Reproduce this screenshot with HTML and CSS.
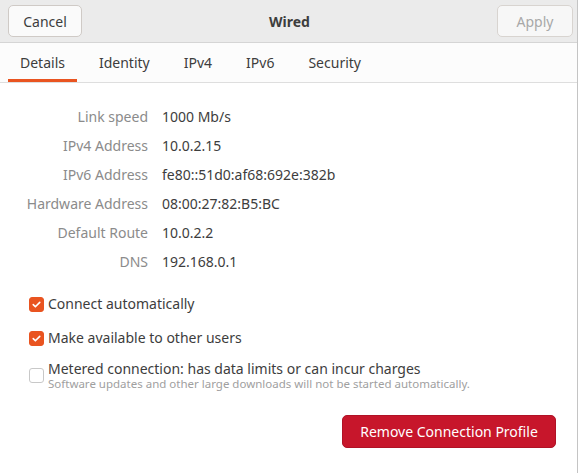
FILE: index.html
```html
<!DOCTYPE html>
<html>
<head>
<meta charset="utf-8">
<link rel="stylesheet" href="styles.css">
</head>
<body>
<div class="window">
  <div class="header">
    <button class="hbtn cancel">Cancel</button>
    <div class="title">Wired</div>
    <button class="hbtn apply">Apply</button>
  </div>
  <div class="tabs">
    <div class="tab active">Details</div>
    <div class="tab">Identity</div>
    <div class="tab">IPv4</div>
    <div class="tab">IPv6</div>
    <div class="tab">Security</div>
  </div>
  <div class="content">
    <div class="grid">
      <div class="lbl">Link speed</div><div class="val">1000 Mb/s</div>
      <div class="lbl">IPv4 Address</div><div class="val">10.0.2.15</div>
      <div class="lbl">IPv6 Address</div><div class="val">fe80::51d0:af68:692e:382b</div>
      <div class="lbl">Hardware Address</div><div class="val">08:00:27:82:B5:BC</div>
      <div class="lbl">Default Route</div><div class="val">10.0.2.2</div>
      <div class="lbl">DNS</div><div class="val">192.168.0.1</div>
    </div>
    <div class="checks">
      <div class="check">
        <span class="box on"><svg viewBox="0 0 16 16" width="16" height="16"><path d="M4 8.2l2.6 2.6L12 5.4" fill="none" stroke="#fff" stroke-width="2" stroke-linecap="round" stroke-linejoin="round"/></svg></span>
        <span class="ctext">Connect automatically</span>
      </div>
      <div class="check">
        <span class="box on"><svg viewBox="0 0 16 16" width="16" height="16"><path d="M4 8.2l2.6 2.6L12 5.4" fill="none" stroke="#fff" stroke-width="2" stroke-linecap="round" stroke-linejoin="round"/></svg></span>
        <span class="ctext">Make available to other users</span>
      </div>
      <div class="check metered">
        <span class="box"></span>
        <div class="ctexts">
          <span class="ctext">Metered connection: has data limits or can incur charges</span>
          <span class="sub">Software updates and other large downloads will not be started automatically.</span>
        </div>
      </div>
    </div>
    <div class="actions">
      <button class="remove">Remove Connection Profile</button>
    </div>
  </div>
</div>
</body>
</html>
```
FILE: styles.css
```css
html, body {
  margin: 0;
  padding: 0;
  background: #ffffff;
}
body {
  font-family: "Noto Sans", "DejaVu Sans", sans-serif;
  font-size: 14px;
  color: #3d3d3d;
}
.window {
  width: 577px;
  height: 473px;
  border-right: 1px solid #c4c4c4;
  background: #ffffff;
  display: flex;
  flex-direction: column;
}
.header {
  height: 42px;
  background: #ebebeb;
  border-bottom: 1px solid #d5d5d5;
  display: flex;
  align-items: center;
  padding: 0 4px 0 8px;
  flex-shrink: 0;
}
.hbtn {
  height: 32px;
  font-family: inherit;
  font-size: 14px;
  border: 1px solid #cfcac6;
  border-radius: 5px;
  background: #fafafa;
  color: #3d3d3d;
  padding: 0;
}
.cancel { width: 74px; }
.apply { width: 76px; color: #a8a8a8; background: #f7f7f7; border-color: #d8d4d0; }
.title {
  flex: 1;
  text-align: center;
  font-weight: bold;
  color: #3d3d3d;
}
.tabs {
  height: 39px;
  border-bottom: 1px solid #dedede;
  display: flex;
  padding-left: 8px;
  background: #fcfcfc;
  flex-shrink: 0;
}
.tab {
  padding: 3px 12px 0;
  margin-right: 10px;
  display: flex;
  align-items: center;
  color: #3d3d3d;
  border-bottom: 3px solid transparent;
  box-sizing: border-box;
  height: 39px;
}
.tab.active { border-bottom-color: #e95420; }
.content {
  padding-top: 19px;
  flex: 1;
  display: flex;
  flex-direction: column;
}
.grid {
  display: grid;
  grid-template-columns: 148px auto;
  column-gap: 14px;
  grid-auto-rows: 29px;
  align-items: center;
}
.lbl { text-align: right; color: #8b8b8b; }
.val { color: #3d3d3d; }
.checks {
  padding-left: 29px;
  padding-top: 16px;
  display: flex;
  flex-direction: column;
  gap: 10px;
}
.check {
  display: flex;
  align-items: center;
  gap: 4px;
  min-height: 24px;
}
.box {
  width: 15px;
  height: 15px;
  border-radius: 3px;
  border: 1px solid #c8c8c8;
  box-sizing: border-box;
  background: #ffffff;
  display: flex;
  align-items: center;
  justify-content: center;
  flex-shrink: 0;
}
.box svg { width: 15px; height: 15px; }
.box.on { background: #e95420; border-color: #e95420; }
.ctexts { display: flex; flex-direction: column; }
.ctext { color: #3d3d3d; line-height: 18px; }
.sub { font-size: 11.5px; color: #a0a0a0; line-height: 12px; }
.metered { align-items: center; }
.actions {
  display: flex;
  justify-content: flex-end;
  padding-right: 21px;
  padding-top: 25px;
}
.remove {
  width: 214px;
  height: 33px;
  background: #c7162b;
  color: #ffffff;
  border: 1px solid #b01226;
  border-radius: 5px;
  font-family: inherit;
  font-size: 14px;
  padding: 0;
}
```
